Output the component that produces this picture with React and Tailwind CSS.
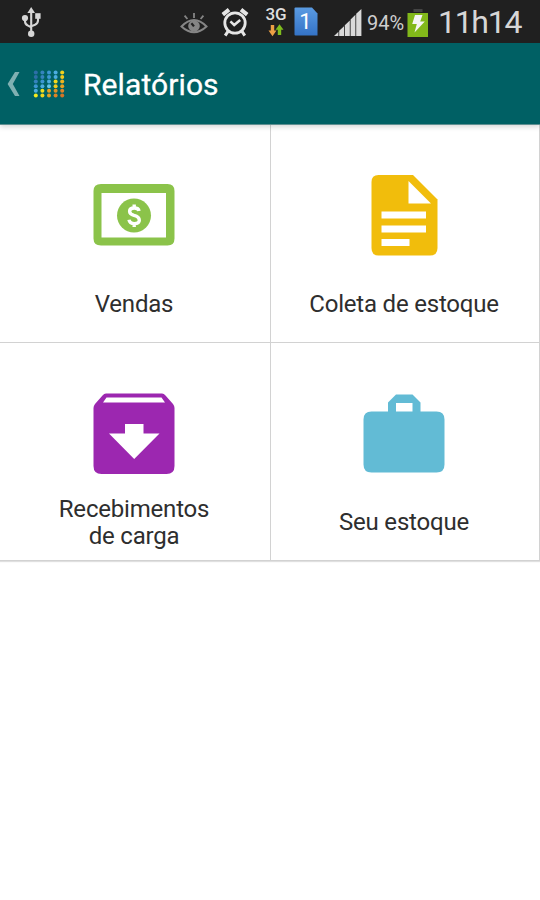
// Launcher logo, one array per row of dots
const DOTS = [
  ["#2c6fa8", "#3583bd", "#3c96d2", "#4bade0", "#f2d21c"],
  ["#2c6fa8", "#3583bd", "#3c96d2", "#4bade0", "#f2c81c"],
  ["#3583bd", "#3c96d2", "#4bade0", "#f2d81c", "#f0b41e"],
  ["#3c96d2", "#4bade0", "#62c4ea", "#f0c81c", "#e8a022"],
  ["#4bade0", "#f2dc1c", "#e8a022", "#de9024", "#de8426"],
  ["#f5ec1c", "#f0d41c", "#e8a022", "#de8426", "#d47426"],
];

function UsbIcon() {
  return (
    <svg width="20" height="32" viewBox="0 0 20 32" className="ml-[21px]" fill="#d6d6d6" stroke="#d6d6d6">
      <circle cx="10.2" cy="27.8" r="3.2" stroke="none" />
      <path d="M10.2 1 14 7H6.4z" stroke="none" />
      <path d="M10.2 5v23M4 12v3.2q0 3 3 4.4l3.2 1.6M17 10v4.6q0 2.8-3 4.2l-3.8 1.6" fill="none" strokeWidth="2.1" />
      <circle cx="4" cy="12" r="3.1" stroke="none" />
      <rect x="14.2" y="7.2" width="5.4" height="5.6" stroke="none" />
    </svg>
  );
}

function EyeIcon() {
  return (
    <svg width="28" height="24" viewBox="0 0 28 24" className="mt-0.5" fill="none" stroke="#858585">
      <path d="M1.5 15.5Q14 2.5 26.5 15.5Q14 27 1.5 15.5Z" strokeWidth="2" />
      <circle cx="14" cy="15" r="5.8" fill="#858585" stroke="none" />
      <path d="M11.4 12.2 14 15.4" stroke="#202020" strokeWidth="2.2" />
      <path d="M14 2v5M4.6 4.6 7.4 8M23.4 4.6 20.6 8" strokeWidth="1.8" />
    </svg>
  );
}

function AlarmIcon() {
  return (
    <svg width="28" height="30" viewBox="0 0 28 30" className="ml-[13px]" fill="none" stroke="#e6e6e6">
      <circle cx="14" cy="16" r="10.2" strokeWidth="2.8" />
      <path d="M9.4 14.4 13.2 18l6-5" strokeWidth="2.5" />
      <path d="M1.8 7.6 8 2.6M26.2 7.6 20 2.6" strokeWidth="4" />
      <path d="M7 24.4 4.2 28.6M21 24.4l2.8 4.2" strokeWidth="3" />
    </svg>
  );
}

function NetworkIcon() {
  return (
    <div className="ml-4 flex w-[22px] flex-col items-center">
      <span className="text-[17px] font-medium leading-[15px] text-[#dedede]">3G</span>
      <svg width="16" height="13" viewBox="0 0 16 13" className="mt-0.5">
        <path d="M2.8 1h3.4v5.5h2.3L4.5 12.2.5 6.5h2.3z" fill="#eda045" />
        <path d="M9.8 11h3.4V5.8h2.3L11.5.2 7.5 5.8h2.3z" fill="#7fbd1d" />
      </svg>
    </div>
  );
}

function SimIcon() {
  return (
    <svg width="24" height="30" viewBox="0 0 24 30" className="ml-[7px]">
      <defs>
        <linearGradient id="sim" x1="0" y1="0" x2="0" y2="1">
          <stop offset="0" stopColor="#5a9be2" />
          <stop offset="1" stopColor="#3473c6" />
        </linearGradient>
      </defs>
      <path d="M1.5.5H18L23.5 6.5V28.5H1.5Q.5 28.5.5 27.5V1.5Q.5.5 1.5.5Z" fill="url(#sim)" />
      <text x="11.5" y="22.3" textAnchor="middle" fontSize="22" fill="#fff" fontFamily="Roboto, sans-serif">1</text>
    </svg>
  );
}

function SignalIcon() {
  return (
    <svg width="28" height="28" viewBox="0 0 28 28" className="ml-4 mt-0.5" fill="#d9d9d9">
      <path d="M0 27 4.4 22.8V27zM5.2 21.8 10 17.2V27H5.2zM10.8 16.2 15.8 11.4V27h-5zM16.6 10.4 21.4 5.8V27h-4.8zM22.2 4.8 27.4 0V27h-5.2z" />
    </svg>
  );
}

function BatteryIcon() {
  return (
    <svg width="22" height="30" viewBox="0 0 22 30" className="ml-0.5 mt-0.5">
      <path d="M6.5 1h9v3h-9z" fill="#444" />
      <path d="M.5 5h20.5v24H.5z" fill="#82b81a" />
      <path d="M8 7h7.5l-2.3 6.4h4.6L7.5 24.4 9.8 16H5.2z" fill="#f5f5f5" />
    </svg>
  );
}

function StatusBar() {
  return (
    <div className="flex h-[43px] items-center bg-[#202020]">
      <UsbIcon />
      <div className="ml-auto mr-4 flex items-center">
        <EyeIcon />
        <AlarmIcon />
        <NetworkIcon />
        <SimIcon />
        <SignalIcon />
        <span className="ml-[5px] mt-0.5 w-[38px] whitespace-nowrap text-[20px] leading-none text-[#cfcfcf]">94%</span>
        <BatteryIcon />
        <span className="ml-[9px] w-[86px] whitespace-nowrap text-[32px] leading-none tracking-[-1.3px] text-[#d6d6d6]">11h14</span>
      </div>
    </div>
  );
}

function LogoDots() {
  return (
    <svg width="34" height="30" viewBox="0 0 34 30" className="ml-3">
      {DOTS.map((row, y) =>
        row.map((color, x) => (
          <circle key={`${x}-${y}`} cx={3.8 + x * 6.6} cy={3.4 + y * 4.6} r="2" fill={color} />
        ))
      )}
    </svg>
  );
}

function TitleBar() {
  return (
    <div className="relative z-10 flex h-[82px] items-center border-b border-[#5f8f91] bg-[#006064] shadow-[0_2px_5px_rgba(0,0,0,0.16)]">
      <svg width="13" height="26" viewBox="0 0 13 26" className="ml-[7px]">
        <path d="M8 1h4.5L5.8 13 12.5 25H8L.6 13z" fill="#80b0b2" />
      </svg>
      <LogoDots />
      <h1 className="ml-[17px] mt-0.5 text-[30px] leading-none tracking-[0.1px] text-white [-webkit-text-stroke:0.3px_#fff]">Relatórios</h1>
    </div>
  );
}

function MoneyIcon() {
  return (
    <svg width="82" height="82" viewBox="0 0 82 82">
      <path fillRule="evenodd" d="M8 9H74.5Q81.5 9 81.5 16V63.5Q81.5 70.5 74.5 70.5H8Q.5 70.5.5 63.5V16Q.5 9 8 9ZM8.5 18V62.5H73V18Z" fill="#8bc34a" />
      <circle cx="41" cy="40.5" r="17" fill="#8bc34a" />
      <path d="M46 36Q45.6 33 41.2 33Q36.6 33 36.6 36.2Q36.6 39 41 40.3Q46.3 41.7 46.3 45.2Q46.3 48.6 41.4 48.6Q36.6 48.6 36 44.8M41.2 29.5V33.5M41.2 48V52" fill="none" stroke="#fff" strokeWidth="3.4" />
    </svg>
  );
}

function DocumentIcon() {
  return (
    <svg width="82" height="82" viewBox="0 0 82 82">
      <path d="M15.5 0H50L74.5 24.5V73Q74.5 80.5 67 80.5H15.5Q8.5 80.5 8.5 73V7Q8.5 0 15.5 0Z" fill="#f1bd0c" />
      <path d="M45.5 6V28.5H68ZM18.5 36.5H63V43.5H18.5ZM18.5 50.5H63V57.5H18.5ZM18.5 64H46.5V71H18.5Z" fill="#fff" />
    </svg>
  );
}

function ArchiveIcon() {
  return (
    <svg width="82" height="82" viewBox="0 0 82 82">
      <path d="M13 .5H69Q71 .5 72.5 2.5L80 11Q81.5 13 81.5 15V73Q81.5 81 73.5 81H8.5Q.5 81 .5 73V15Q.5 13 2 11L9.5 2.5Q11 .5 13 .5Z" fill="#9c27b0" />
      <path d="M13.5 4.5H68.5L72 9.5H10ZM32 31H50.5V40.5H66.5L41.2 66 16 40.5H32Z" fill="#fff" />
    </svg>
  );
}

function BriefcaseIcon() {
  return (
    <svg width="82" height="82" viewBox="0 0 82 82">
      <path fillRule="evenodd" d="M8.5 18.5H25V9.5L33 1.5H49.5L57.5 9.5V18.5H73.5Q81.5 18.5 81.5 26.5V71.5Q81.5 79.5 73.5 79.5H8.5Q.5 79.5.5 71.5V26.5Q.5 18.5 8.5 18.5ZM33 10V18.5H49.5V10Z" fill="#62bbd5" />
    </svg>
  );
}

const REPORTS = [
  { Icon: MoneyIcon, lines: ["Vendas"] },
  { Icon: DocumentIcon, lines: ["Coleta de estoque"] },
  { Icon: ArchiveIcon, lines: ["Recebimentos", "de carga"] },
  { Icon: BriefcaseIcon, lines: ["Seu estoque"] },
];

function ReportTile({ Icon, lines }) {
  return (
    <button className="flex h-[218px] flex-col items-center border-b border-r border-[#d2d2d2] pr-0.5 pt-[50px]">
      <Icon />
      <span className="mt-[19px] flex h-[57px] flex-col items-center justify-center text-[24px] leading-[27px] tracking-[-0.2px] text-[#2e2e2e]">
        {lines.map((line) => (
          <span key={line}>{line}</span>
        ))}
      </span>
    </button>
  );
}

export default function App() {
  return (
    <div className="h-[900px] w-[540px] overflow-hidden bg-white font-['Roboto',sans-serif]">
      <StatusBar />
      <TitleBar />
      <main className="grid grid-cols-[271px_269px] shadow-[0_1px_1px_rgba(0,0,0,0.12)]">
        {REPORTS.map((report) => (
          <ReportTile key={report.lines[0]} {...report} />
        ))}
      </main>
    </div>
  );
}
